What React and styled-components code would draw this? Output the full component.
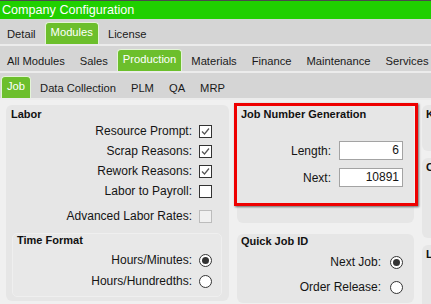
import styled, { createGlobalStyle } from "styled-components";

const GlobalStyle = createGlobalStyle`
  html, body {
    margin: 0;
    padding: 0;
    width: 431px;
    height: 304px;
    overflow: hidden;
    background: #f0f0f0;
    font-family: "Liberation Sans", Arial, sans-serif;
    color: #141414;
  }
`;

const Window = styled.div`
  width: 431px;
  height: 304px;
  overflow: hidden;
  background: #f0f0f0;
`;

const TitleBar = styled.div`
  height: 18px;
  border-top: 1px solid #4a4a4a;
  background: #20d000;
  color: #fff;
  font-size: 12.6px;
  line-height: 18px;
  padding-left: 2px;
  white-space: nowrap;
`;

const TabRow = styled.div`
  display: flex;
  align-items: flex-end;
  gap: 3px;
  height: 25px;
  padding-left: 1px;
  background: #d5d5d5;
  border-bottom: 2px solid #ececec;
  white-space: nowrap;
`;

const Tab = styled.div`
  height: ${(p) => (p.$active ? "21px" : "22px")};
  padding: 0 ${(p) => (p.$active ? "5px" : "6px")};
  font-size: 11.2px;
  line-height: ${(p) => (p.$active ? "19px" : "24px")};
  color: ${(p) => (p.$active ? "#fff" : "#1a1a1a")};
  background: ${(p) => (p.$active ? "#6cbf2c" : "transparent")};
  border: ${(p) => (p.$active ? "1px solid #e4f4d8" : "none")};
  border-bottom: none;
  border-radius: 4px 4px 0 0;
`;

const Content = styled.div`
  display: grid;
  grid-template-columns: 223px 177px 100px;
  column-gap: 8px;
  align-items: start;
  padding: 5px 0 0 6px;
`;

const Column = styled.div`
  display: flex;
  flex-direction: column;
  gap: ${(p) => p.$gap || 0}px;
`;

const Panel = styled.div`
  position: relative;
  background: #e6e6e6;
  border-radius: 6px;
  padding: ${(p) => p.$pad || "3px 7px 4px 5px"};
  height: ${(p) => (p.$h ? `${p.$h}px` : "auto")};
  box-sizing: border-box;
`;

const SubPanel = styled.div`
  margin: 7px 0 0 1px;
  padding: 0 9px 5px 4px;
  background: #e8e8e8;
  border: 1px solid #efefef;
  border-radius: 5px;
`;

const GroupTitle = styled.div`
  font-size: 11px;
  font-weight: bold;
  line-height: 13px;
  color: #111;
  white-space: nowrap;
`;

const Row = styled.div`
  display: flex;
  justify-content: flex-end;
  align-items: center;
  height: ${(p) => p.$h || 20}px;
  margin-top: ${(p) => p.$mt || 0}px;
  padding-right: ${(p) => p.$pr || 0}px;
  gap: ${(p) => p.$gap || 7}px;
  font-size: 12px;
  white-space: nowrap;
`;

const Box = styled.span`
  display: inline-flex;
  width: 11px;
  height: 11px;
  border: 1px solid ${(p) => (p.$disabled ? "#bcbcbc" : "#333")};
  background: ${(p) => (p.$disabled ? "#f0f0f0" : "#fff")};
  align-items: center;
  justify-content: center;
`;

const Radio = styled.span`
  display: inline-flex;
  width: 11px;
  height: 11px;
  border: 1px solid #333;
  border-radius: 50%;
  background: #fff;
  align-items: center;
  justify-content: center;
  &::after {
    content: "";
    width: 7px;
    height: 7px;
    border-radius: 50%;
    background: ${(p) => (p.$on ? "#333" : "transparent")};
  }
`;

const Input = styled.div`
  width: 59px;
  height: 17px;
  padding-right: 3px;
  border: 1px solid #a3a3a3;
  background: #fff;
  font-size: 12px;
  line-height: 17px;
  text-align: right;
`;

const Highlight = styled.div`
  position: absolute;
  left: -3px;
  top: -2px;
  width: 178px;
  height: 97px;
  border: 3px solid #ee0000;
  box-shadow: 1px 1px 2px rgba(0, 0, 0, 0.55);
  pointer-events: none;
`;

const Check = ({ checked, disabled }) => (
  <Box $disabled={disabled}>
    {checked && (
      <svg width="9" height="9" viewBox="0 0 9 9">
        <path d="M1 4.5 L3.5 7 L8 1.5" fill="none" stroke="#555" strokeWidth="1.2" />
      </svg>
    )}
  </Box>
);

export default function App() {
  return (
    <Window>
      <GlobalStyle />
      <TitleBar>Company Configuration</TitleBar>
      <TabRow>
        <Tab>Detail</Tab>
        <Tab $active>Modules</Tab>
        <Tab>License</Tab>
      </TabRow>
      <TabRow>
        <Tab>All Modules</Tab>
        <Tab>Sales</Tab>
        <Tab $active>Production</Tab>
        <Tab>Materials</Tab>
        <Tab>Finance</Tab>
        <Tab>Maintenance</Tab>
        <Tab>Services</Tab>
      </TabRow>
      <TabRow>
        <Tab $active>Job</Tab>
        <Tab>Data Collection</Tab>
        <Tab>PLM</Tab>
        <Tab>QA</Tab>
        <Tab>MRP</Tab>
      </TabRow>

      <Content>
        <Panel>
          <GroupTitle>Labor</GroupTitle>
          <Row $pr={10}>Resource Prompt:<Check checked /></Row>
          <Row $pr={10}>Scrap Reasons:<Check checked /></Row>
          <Row $pr={10}>Rework Reasons:<Check checked /></Row>
          <Row $pr={10}>Labor to Payroll:<Check /></Row>
          <Row $pr={10} $mt={5}>Advanced Labor Rates:<Check disabled /></Row>
          <SubPanel>
            <GroupTitle>Time Format</GroupTitle>
            <Row $mt={3}>Hours/Minutes:<Radio $on /></Row>
            <Row $mt={1}>Hours/Hundredths:<Radio /></Row>
          </SubPanel>
        </Panel>

        <Column $gap={11}>
          <Panel $pad="3px 11px 0 4px" $h={118}>
            <GroupTitle>Job Number Generation</GroupTitle>
            <Row $h={19} $mt={20} $gap={8}>Length:<Input>6</Input></Row>
            <Row $h={19} $mt={8} $gap={8}>Next:<Input>10891</Input></Row>
            <Highlight />
          </Panel>
          <Panel $pad="1px 11px 6px 4px">
            <GroupTitle>Quick Job ID</GroupTitle>
            <Row $mt={4} $gap={9}>Next Job:<Radio $on /></Row>
            <Row $mt={5} $gap={9}>Order Release:<Radio /></Row>
          </Panel>
        </Column>

        <Column $gap={7}>
          <Panel $pad="3px 4px" $h={46}>
            <GroupTitle>Kanban</GroupTitle>
          </Panel>
          <Panel $pad="3px 4px" $h={80}>
            <GroupTitle>Costing</GroupTitle>
          </Panel>
          <Panel $pad="3px 4px" $h={70}>
            <GroupTitle>Lot</GroupTitle>
          </Panel>
        </Column>
      </Content>
    </Window>
  );
}
